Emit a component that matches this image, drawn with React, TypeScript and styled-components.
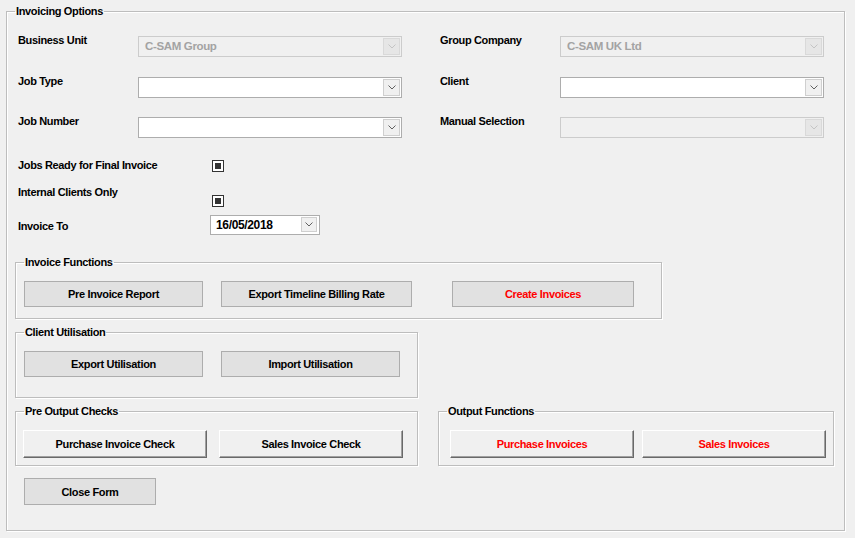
import React from 'react';
import styled, { createGlobalStyle } from 'styled-components';

const GlobalStyle = createGlobalStyle`
  html, body {
    margin: 0;
    background: #f0f0f0;
  }
  body {
    font-family: "Liberation Sans", Arial, sans-serif;
    font-size: 11px;
    font-weight: bold;
    letter-spacing: -0.35px;
    color: #000;
  }
`;

const Window = styled.div`
  width: 855px;
  height: 538px;
  box-sizing: border-box;
  padding: 5px 0 0 6px;
`;

const Group = styled.fieldset<{ $width: number; $height?: number; $pad: string }>`
  margin: 0;
  min-width: 0;
  box-sizing: border-box;
  width: ${p => p.$width}px;
  ${p => (p.$height ? `height: ${p.$height}px;` : '')}
  padding: ${p => p.$pad};
  border: 1px solid #bdbdbd;
  box-shadow: 1px 1px 0 #fff, inset 1px 1px 0 #fff;
`;

const Legend = styled.legend<{ $shift?: number }>`
  padding: 0 1px;
  margin-left: ${p => p.$shift || 0}px;
  line-height: 13px;
  font-size: 11px;
`;

const FieldArea = styled.div`
  display: flex;
  gap: 38px;
  margin: 18px 0 0 3px;
`;

const FieldColumn = styled.div`
  display: grid;
  grid-template-columns: 120px 264px;
  grid-auto-rows: 21px;
  row-gap: 19.5px;
`;

const Label = styled.span<{ $nudge?: number; $center?: boolean }>`
  align-self: ${p => (p.$center ? 'center' : 'start')};
  line-height: 13px;
  margin-top: ${p => p.$nudge ?? -2}px;
  white-space: nowrap;
`;

const Combo = styled.div<{ $disabled?: boolean }>`
  display: flex;
  box-sizing: border-box;
  height: 21px;
  padding: 1px;
  border: 1px solid ${p => (p.$disabled ? '#cccccc' : '#adadad')};
  background: ${p => (p.$disabled ? '#f0f0f0' : '#ffffff')};
`;

const ComboText = styled.span<{ $disabled?: boolean }>`
  flex: 1;
  padding-left: 5px;
  line-height: 17px;
  font-size: 11.5px;
  color: ${p => (p.$disabled ? '#a3a3a3' : '#000')};
`;

const DropButton = styled.span<{ $disabled?: boolean }>`
  width: 17px;
  box-sizing: border-box;
  display: flex;
  align-items: center;
  justify-content: center;
  border: 1px solid ${p => (p.$disabled ? '#d9d9d9' : '#cfcfcf')};
  background: ${p => (p.$disabled ? '#e6e6e6' : '#f0f0f0')};
`;

const OptionRow = styled.div<{ $height: number; $top: number; $align: string }>`
  display: grid;
  grid-template-columns: 192px auto;
  height: ${p => p.$height}px;
  margin: ${p => p.$top}px 0 0 3px;
  align-items: ${p => p.$align};
`;

const CheckBox = styled.span<{ $top?: number; $center?: boolean }>`
  width: 12px;
  height: 12px;
  box-sizing: border-box;
  margin: ${p => p.$top || 0}px 0 0 2px;
  border: 1px solid #333;
  background: #fff;
  padding: 2px;
  display: flex;
  align-self: ${p => (p.$center ? 'center' : 'start')};
  &::after {
    content: '';
    flex: 1;
    background: #333;
  }
`;

const DatePicker = styled.div`
  width: 110px;
  height: 20px;
  box-sizing: border-box;
  display: flex;
  padding: 1px;
  border: 1px solid #adadad;
  background: #fff;
`;

const DateText = styled.span`
  flex: 1;
  padding-left: 4px;
  font-size: 12px;
  line-height: 16px;
`;

const DateButton = styled(DropButton)`
  width: 16px;
  margin: 0 1px 1px 0;
`;

const ButtonRow = styled.div<{ $gap: number }>`
  display: flex;
  gap: ${p => p.$gap}px;
`;

const FlatButton = styled.button<{ $width: number; $red?: boolean; $shift?: number }>`
  width: ${p => p.$width}px;
  height: 26px;
  margin: 0 0 0 ${p => p.$shift || 0}px;
  padding: 0;
  background: #e1e1e1;
  border: 1px solid #adadad;
  font: inherit;
  letter-spacing: inherit;
  color: ${p => (p.$red ? '#ff0000' : '#000')};
`;

const RaisedButton = styled.button<{ $width: number; $red?: boolean }>`
  width: ${p => p.$width}px;
  height: 28px;
  margin: 0;
  padding: 0;
  background: #f0f0f0;
  border-style: solid;
  border-width: 1px;
  border-color: #ffffff #696969 #696969 #ffffff;
  box-shadow: inset -1px -1px 0 #a0a0a0;
  font: inherit;
  letter-spacing: inherit;
  color: ${p => (p.$red ? '#ff0000' : '#000')};
`;

const OutputRow = styled.div`
  display: flex;
  gap: 20px;
  margin-top: 7px;
`;

const Spaced = styled.div<{ $top: number }>`
  margin-top: ${p => p.$top}px;
`;

const CloseButton = styled(FlatButton)`
  height: 27px;
  margin: 12px 0 0 9px;
`;

const Chevron = ({ color }: { color: string }) => (
  <svg width="8" height="5" viewBox="0 0 8 5">
    <polyline points="0.5,0.5 4,4 7.5,0.5" fill="none" stroke={color} strokeWidth="1" />
  </svg>
);

type ComboProps = { value?: string; disabled?: boolean };

const ComboBox: React.FC<ComboProps> = ({ value, disabled }) => (
  <Combo $disabled={disabled}>
    <ComboText $disabled={disabled}>{value}</ComboText>
    <DropButton $disabled={disabled}>
      <Chevron color={disabled ? '#c4c4c4' : '#606060'} />
    </DropButton>
  </Combo>
);

const leftFields: [string, ComboProps][] = [
  ['Business Unit', { value: 'C-SAM Group', disabled: true }],
  ['Job Type', {}],
  ['Job Number', {}]
];

const rightFields: [string, ComboProps][] = [
  ['Group Company', { value: 'C-SAM UK Ltd', disabled: true }],
  ['Client', {}],
  ['Manual Selection', { disabled: true }]
];

const App: React.FC = () => {
  return (
    <Window>
      <GlobalStyle />
      <Group $width={839} $height={526} $pad="0 8px">
        <Legend>Invoicing Options</Legend>

        <FieldArea>
          {[leftFields, rightFields].map((fields, i) => (
            <FieldColumn key={i}>
              {fields.map(([label, props]) => (
                <React.Fragment key={label}>
                  <Label>{label}</Label>
                  <ComboBox {...props} />
                </React.Fragment>
              ))}
            </FieldColumn>
          ))}
        </FieldArea>

        <OptionRow $height={17} $top={19} $align="center">
          <Label $nudge={0} $center>Jobs Ready for Final Invoice</Label>
          <CheckBox $center />
        </OptionRow>
        <OptionRow $height={22} $top={11} $align="start">
          <Label $nudge={1}>Internal Clients Only</Label>
          <CheckBox $top={10} />
        </OptionRow>
        <OptionRow $height={20} $top={8} $align="center">
          <Label $nudge={3} $center>Invoice To</Label>
          <DatePicker>
            <DateText>16/05/2018</DateText>
            <DateButton>
              <Chevron color="#606060" />
            </DateButton>
          </DatePicker>
        </OptionRow>

        <Spaced $top={21}>
          <Group $width={647} $pad="12px 8px 11px">
            <Legend>Invoice Functions</Legend>
            <ButtonRow $gap={18}>
              <FlatButton $width={179}>Pre Invoice Report</FlatButton>
              <FlatButton $width={191}>Export Timeline Billing Rate</FlatButton>
              <FlatButton $width={182} $shift={22} $red>Create Invoices</FlatButton>
            </ButtonRow>
          </Group>
        </Spaced>

        <Spaced $top={7}>
          <Group $width={403} $pad="12px 8px 20px">
            <Legend>Client Utilisation</Legend>
            <ButtonRow $gap={18}>
              <FlatButton $width={179}>Export Utilisation</FlatButton>
              <FlatButton $width={179}>Import Utilisation</FlatButton>
            </ButtonRow>
          </Group>
        </Spaced>

        <OutputRow>
          <Group $width={403} $pad="12px 7px 7px">
            <Legend $shift={1}>Pre Output Checks</Legend>
            <ButtonRow $gap={12}>
              <RaisedButton $width={184}>Purchase Invoice Check</RaisedButton>
              <RaisedButton $width={184}>Sales Invoice Check</RaisedButton>
            </ButtonRow>
          </Group>
          <Group $width={396} $pad="12px 7px 7px 11px">
            <Legend $shift={-3}>Output Functions</Legend>
            <ButtonRow $gap={8}>
              <RaisedButton $width={184} $red>Purchase Invoices</RaisedButton>
              <RaisedButton $width={184} $red>Sales Invoices</RaisedButton>
            </ButtonRow>
          </Group>
        </OutputRow>

        <CloseButton $width={132}>Close Form</CloseButton>
      </Group>
    </Window>
  );
};

export default App;
